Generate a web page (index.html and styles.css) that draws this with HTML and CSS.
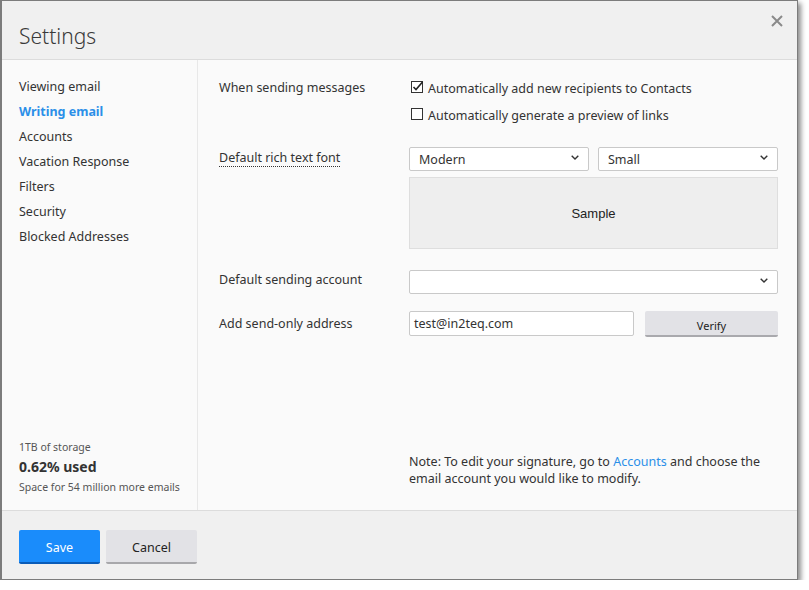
FILE: index.html
```html
<!DOCTYPE html>
<html lang="en">
<head>
    <meta charset="UTF-8">
    <title>Settings</title>
    <link rel="stylesheet" href="styles.css">
</head>
<body>
    <div class="dialog">
        <div class="dialog-header">
            <h1>Settings</h1>
            <span class="close-btn">
                <svg width="12" height="12" viewBox="0 0 12 12"><path d="M1 1L11 11M11 1L1 11" stroke="#8a8a8a" stroke-width="2"/></svg>
            </span>
        </div>

        <div class="dialog-body">
            <div class="sidebar">
                <ul class="nav">
                    <li>Viewing email</li>
                    <li class="nav--active">Writing email</li>
                    <li>Accounts</li>
                    <li>Vacation Response</li>
                    <li>Filters</li>
                    <li>Security</li>
                    <li>Blocked Addresses</li>
                </ul>
                <div class="storage">
                    <div class="storage-total">1TB of storage</div>
                    <div class="storage-used">0.62% used</div>
                    <div class="storage-left">Space for 54 million more emails</div>
                </div>
            </div>

            <div class="content">
                <div class="setting-row">
                    <span class="setting-label">When sending messages</span>
                    <div class="setting-control">
                        <label class="check-row">
                            <span class="check-box">
                                <svg width="13" height="13" viewBox="0 0 13 13"><rect x="0.5" y="0.5" width="11" height="11" fill="#fff" stroke="#333"/><path d="M2.5 6L5 8.5L11.5 1" fill="none" stroke="#222" stroke-width="1.6"/></svg>
                            </span>
                            Automatically add new recipients to Contacts
                        </label>
                        <label class="check-row">
                            <span class="check-box">
                                <svg width="13" height="13" viewBox="0 0 13 13"><rect x="0.5" y="0.5" width="11" height="11" fill="#fff" stroke="#333"/></svg>
                            </span>
                            Automatically generate a preview of links
                        </label>
                    </div>
                </div>

                <div class="setting-row setting-row--font">
                    <span class="setting-label"><span class="dotted">Default rich text font</span></span>
                    <div class="setting-control">
                        <div class="font-selects">
                            <div class="select-box">Modern<span class="chevron"><svg width="8" height="5" viewBox="0 0 8 5"><path d="M0.7 0.7L4 4L7.3 0.7" fill="none" stroke="#333" stroke-width="1.4"/></svg></span></div>
                            <div class="select-box">Small<span class="chevron"><svg width="8" height="5" viewBox="0 0 8 5"><path d="M0.7 0.7L4 4L7.3 0.7" fill="none" stroke="#333" stroke-width="1.4"/></svg></span></div>
                        </div>
                        <div class="font-sample">Sample</div>
                    </div>
                </div>

                <div class="setting-row setting-row--account">
                    <span class="setting-label">Default sending account</span>
                    <div class="setting-control">
                        <div class="select-box"><span class="chevron"><svg width="8" height="5" viewBox="0 0 8 5"><path d="M0.7 0.7L4 4L7.3 0.7" fill="none" stroke="#333" stroke-width="1.4"/></svg></span></div>
                    </div>
                </div>

                <div class="setting-row setting-row--address">
                    <span class="setting-label">Add send-only address</span>
                    <div class="setting-control address-row">
                        <div class="text-input">test@in2teq.com</div>
                        <button class="verify-btn">Verify</button>
                    </div>
                </div>

                <p class="note">Note: To edit your signature, go to <span class="link">Accounts</span> and choose the email account you would like to modify.</p>
            </div>
        </div>

        <div class="dialog-footer">
            <button class="btn btn--primary">Save</button>
            <button class="btn">Cancel</button>
        </div>
    </div>
</body>
</html>
```

FILE: styles.css
```css
:root {
    --text: #333;
    --muted: #666;
    --blue: #2b8fe8;
    --border: #c9c9c9;
    --panel: #f0f0f0;
}

body {
    margin: 0;
    background: #fff;
    font-family: "Noto Sans", "Open Sans", sans-serif;
    font-size: 12px;
    color: var(--text);
}

.dialog {
    width: 798px;
    height: 580px;
    box-sizing: border-box;
    border: 1px solid #7c7c7c;
    border-left-width: 2px;
    background: #fafafa;
    display: flex;
    flex-direction: column;
    box-shadow: 3px 3px 5px rgba(0, 0, 0, 0.45);
}

.dialog-header {
    height: 58px;
    flex-shrink: 0;
    background: var(--panel);
    border-bottom: 1px solid #dcdcdc;
    display: flex;
    justify-content: space-between;
    padding: 0 0 0 17px;
}

.dialog-header h1 {
    margin: 0;
    padding-top: 21px;
    font-size: 21px;
    font-weight: 300;
    color: #3a3a3a;
}

.close-btn {
    padding: 13px 14px 0 0;
}

.dialog-body {
    flex: 1;
    display: flex;
    min-height: 0;
}

.sidebar {
    width: 196px;
    flex-shrink: 0;
    border-right: 1px solid #e8e8e8;
    display: flex;
    flex-direction: column;
    justify-content: space-between;
    padding: 14px 0 14px 17px;
    box-sizing: border-box;
}

.nav {
    list-style: none;
    margin: 0;
    padding: 0;
}

.nav li {
    line-height: 25px;
    font-size: 12.5px;
}

.nav .nav--active {
    color: var(--blue);
    font-weight: 700;
}

.storage-total,
.storage-left {
    font-size: 10.5px;
    color: #555;
    line-height: 18px;
}

.storage-used {
    font-size: 14px;
    font-weight: 700;
    line-height: 22px;
}

.content {
    flex: 1;
    padding: 18px 19px 0 21px;
    display: flex;
    flex-direction: column;
}

.setting-row {
    display: flex;
}

.setting-label {
    width: 190px;
    flex-shrink: 0;
    line-height: 20px;
    font-size: 12.5px;
}

.setting-control {
    flex: 1;
}

.dotted {
    border-bottom: 1px dotted #333;
}

.check-row {
    display: flex;
    align-items: center;
    gap: 4px;
    height: 20px;
    margin-bottom: 7px;
    font-size: 12.5px;
}

.check-box {
    display: flex;
    padding: 0 0 2px 2px;
}

.setting-row--font {
    margin-top: 15px;
}

.setting-row--font .setting-label {
    padding-top: 1px;
}

.font-selects {
    display: flex;
    gap: 9px;
}

.select-box {
    flex: 1;
    height: 24px;
    box-sizing: border-box;
    border: 1px solid var(--border);
    border-radius: 2px;
    background: #fff;
    display: flex;
    align-items: center;
    padding: 0 9px;
    font-size: 12.5px;
}

.chevron {
    margin-left: auto;
    display: flex;
    padding-bottom: 3px;
}

.font-sample {
    margin-top: 6px;
    height: 72px;
    box-sizing: border-box;
    background: #eeeeee;
    border: 1px solid #dedede;
    display: flex;
    align-items: center;
    justify-content: center;
    font-family: "Liberation Sans", Arial, sans-serif;
    font-size: 13px;
    color: #222;
}

.setting-row--account {
    margin-top: 21px;
}

.setting-row--address {
    margin-top: 17px;
}

.setting-row--address .setting-label {
    padding-top: 3px;
}

.address-row {
    display: flex;
    gap: 11px;
}

.text-input {
    width: 225px;
    height: 25px;
    box-sizing: border-box;
    border: 1px solid var(--border);
    border-radius: 2px;
    background: #fff;
    padding: 3px 4px 0;
    font-size: 12.5px;
}

.verify-btn {
    flex: 1;
    height: 26px;
    border: none;
    border-bottom: 2px solid #a9a9ad;
    border-radius: 2px;
    background: #e2e2e6;
    font-family: inherit;
    font-size: 11px;
    color: #222;
    padding-top: 5px;
}

.note {
    margin: auto 0 23px 190px;
    font-size: 12.5px;
    line-height: 17px;
}

.link {
    color: var(--blue);
}

.dialog-footer {
    height: 69px;
    flex-shrink: 0;
    box-sizing: border-box;
    background: var(--panel);
    border-top: 1px solid #dcdcdc;
    display: flex;
    align-items: flex-start;
    gap: 6px;
    padding: 19px 0 0 17px;
}

.btn {
    height: 34px;
    padding: 3px 0 0;
    width: 91px;
    border: none;
    border-bottom: 2px solid #a8a8ab;
    border-radius: 2px;
    background: #e2e2e6;
    font-family: inherit;
    font-size: 12.5px;
    color: #222;
}

.btn--primary {
    width: 81px;
    background: #1a8cfb;
    border-bottom-color: #0a5cb8;
    color: #fff;
}
```
